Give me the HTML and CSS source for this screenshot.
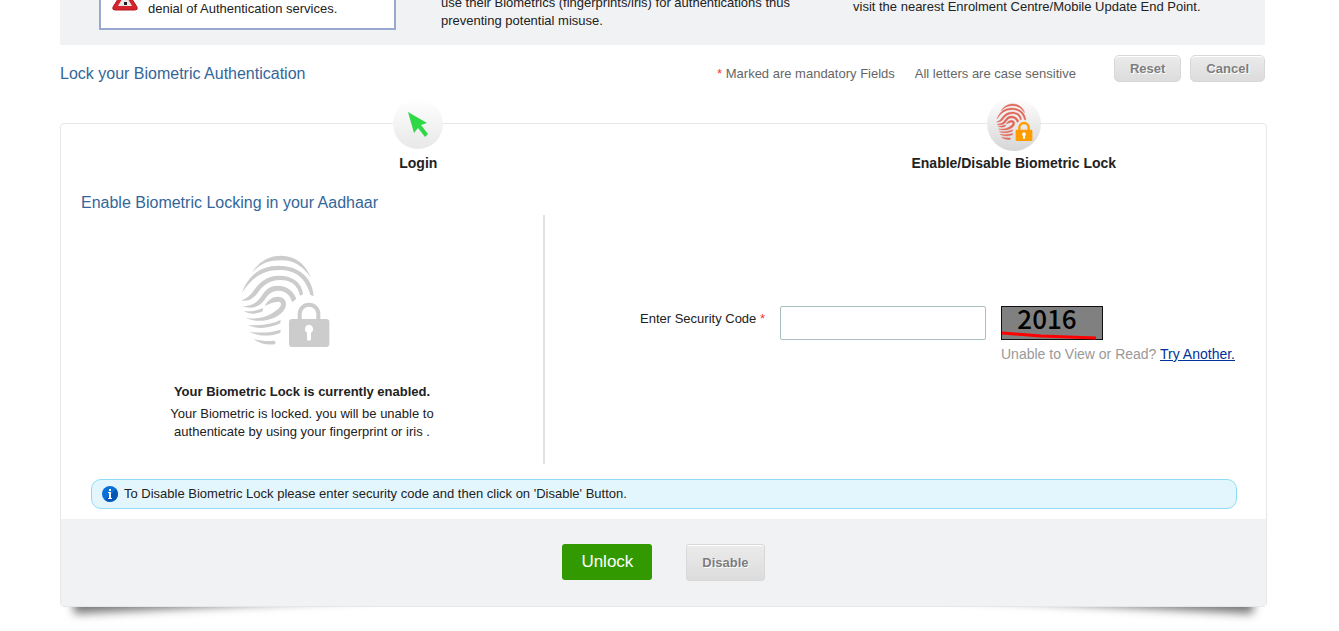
FILE: index.html
```html
<!DOCTYPE html>
<html lang="en">
<head>
    <meta charset="UTF-8">
    <meta name="viewport" content="width=device-width, initial-scale=1.0">
    <title>Lock your Biometric Authentication</title>
    <link rel="stylesheet" href="styles.css">
</head>
<body>
    <div class="container">
        <!-- Notes -->
        <div class="notes">
            <div class="note-box">
                <svg class="warning-icon" width="28" height="26" viewBox="0 0 28 26" aria-hidden="true">
                    <path d="M14 2 L26 21 Q27 24 24 24 L4 24 Q1 24 2 21 Z" fill="#d3252b" stroke="#b3181d"/>
                    <path d="M14 8 L21 20 L7 20 Z" fill="#e9e9e9"/>
                    <path d="M13 10 h2 v4 h-2 z M13 16 h3 v3 h-3 z" fill="#222"/>
                </svg>
                <p>denial of Authentication services.</p>
            </div>
            <p class="note-misuse">use their Biometrics (fingerprints/iris) for authentications thus<br>preventing potential misuse.</p>
            <p class="note-visit">visit the nearest Enrolment Centre/Mobile Update End Point.</p>
        </div>

        <form>
            <!-- Title bar -->
            <div class="title-bar">
                <h1>Lock your Biometric Authentication</h1>
                <p class="hint"><span class="required">*</span> Marked are mandatory Fields</p>
                <p class="hint">All letters are case sensitive</p>
                <div class="title-buttons">
                    <button type="reset" class="btn btn-grey">Reset</button>
                    <button type="button" class="btn btn-grey">Cancel</button>
                </div>
            </div>

            <div class="panel">
                <div class="steps">
                    <div class="step">
                        <div class="step-icon">
                            <svg width="50" height="50" viewBox="0 0 50 50" aria-hidden="true">
                                <defs>
                                    <linearGradient id="disc" x1="0" y1="0" x2="0" y2="1">
                                        <stop offset="0" stop-color="#ffffff"/>
                                        <stop offset="1" stop-color="#e8e8e8"/>
                                    </linearGradient>
                                </defs>
                                <circle cx="25" cy="25" r="25" fill="url(#disc)"/>
                                <path d="M15 13 L34 24 L28 26 L35 35 L32 38 L25 29 L21 34 Z" fill="#2fd846"/>
                            </svg>
                        </div>
                        <span>Login</span>
                    </div>
                    <div class="step">
                        <div class="step-icon">
                            <svg width="54" height="54" viewBox="0 0 162 162" aria-hidden="true">
                                <defs>
                                    <linearGradient id="disc-active" x1="0" y1="0" x2="0" y2="1">
                                        <stop offset="0" stop-color="#ffffff"/>
                                        <stop offset="1" stop-color="#d6d6d6"/>
                                    </linearGradient>
                                </defs>
                                <circle cx="81" cy="81" r="81" fill="url(#disc-active)"/>
                                <g transform="translate(4 2) scale(0.4)" fill="#e0685a" stroke="#e0685a" stroke-width="3">
                                    <use href="#finger"/>
                                </g>
                                <rect x="86" y="98" width="50" height="34" rx="3" fill="#ff9c00"/>
                                <path d="M97 99 V92 a14 14 0 0 1 28 0 V99" fill="none" stroke="#ff9c00" stroke-width="7"/>
                                <path d="M111 106 a6 6 0 0 1 3 11 v8 h-6 v-8 a6 6 0 0 1 3 -11 z" fill="#fff"/>
                            </svg>
                        </div>
                        <span>Enable/Disable Biometric Lock</span>
                    </div>
                </div>

                <h2>Enable Biometric Locking in your Aadhaar</h2>

                <div class="lock-row">
                    <!-- Current state -->
                    <div class="lock-status">
                        <svg width="120" height="94" viewBox="66 45 360 282" aria-hidden="true">
                            <g id="finger">
                                <path d="M96 98 C116 64 148 47 183 47 C224 47 258 72 272 112 C246 76 220 62 186 61 C150 60 121 70 96 98 Z"/>
                                <path d="M66 158 C84 105 125 77 174 77 C236 77 277 112 281 168 L271 165 C258 113 225 90 177 90 C130 90 96 112 66 158 Z"/>
                                <path d="M63 182 C80 176 92 166 102 151 C120 124 144 107 177 107 C219 107 246 129 249 163 L240 167 C234 136 212 119 179 120 C150 121 130 135 115 156 C101 176 84 185 63 182 Z"/>
                                <path d="M67 199 C92 198 110 190 123 170 C137 148 150 137 173 137 C201 137 220 153 229 176 L217 187 C209 164 197 152 175 152 C155 152 145 163 134 179 C118 202 95 208 67 199 Z"/>
                                <path d="M72 213 C93 216 111 212 129 204 L128 214 C110 223 88 224 72 213 Z"/>
                                <path d="M134 197 C145 179 158 170 173 170 C188 170 198 179 198 192 C198 209 183 224 163 233 C139 244 105 246 78 235 C111 237 137 232 154 221 C170 211 183 203 183 192 C182 184 173 184 164 187 C151 190 144 195 134 197 Z"/>
                                <path d="M83 255 C121 258 150 254 182 240 L181 250 C150 265 112 269 83 255 Z"/>
                                <path d="M88 275 C122 280 151 278 182 269 L181 279 C151 290 115 290 88 275 Z"/>
                                <path d="M100 297 C122 302 141 304 162 302 Q170 306 164 313 C141 316 121 311 100 297 Z"/>
                            </g>
                            <rect x="207" y="237" width="121" height="84" rx="9"/>
                            <path class="shackle" d="M239 239 V222 a28 28 0 0 1 56 0 V239"/>
                            <path class="keyhole" d="M267 254 a13 13 0 0 1 6 24 v21 q-6 6 -12 0 v-21 a13 13 0 0 1 6 -24 z"/>
                        </svg>
                        <p class="status-title">Your Biometric Lock is currently enabled.</p>
                        <p>Your Biometric is locked. you will be unable to<br>authenticate by using your fingerprint or iris .</p>
                    </div>

                    <!-- Security code -->
                    <div class="code-row">
                        <label for="securityCode">Enter Security Code <span class="required">*</span></label>
                        <input type="text" id="securityCode" required>
                        <div class="captcha">
                            <svg width="102" height="34" viewBox="0 0 102 34" role="img" aria-label="Security code">
                                <rect x="0.5" y="0.5" width="101" height="33" fill="#808080" stroke="#111"/>
                                <text x="46" y="23" text-anchor="middle" class="captcha-text">2016</text>
                                <path d="M1 27 L40 30 L95 32" fill="none" stroke="#f00" stroke-width="3"/>
                            </svg>
                            <p>Unable to View or Read? <a href="#">Try Another.</a></p>
                        </div>
                    </div>
                </div>

                <div class="info">
                    <svg width="16" height="16" viewBox="0 0 16 16" aria-hidden="true">
                        <circle cx="8" cy="8" r="8" fill="#0a6fd6"/>
                        <path d="M16 8 A8 8 0 0 1 3 14 L14 3 A8 8 0 0 1 16 8 Z" fill="#0657b5"/>
                        <path d="M7 3 h2 v2 h-2 z M6 6 h3 v6 h1 v1 h-4 v-1 h1 v-5 h-1 z" fill="#fff"/>
                    </svg>
                    <p>To Disable Biometric Lock please enter security code and then click on 'Disable' Button.</p>
                </div>

                <div class="actions">
                    <button type="submit" class="btn btn-green">Unlock</button>
                    <button type="button" class="btn btn-grey btn-tall">Disable</button>
                </div>
            </div>
        </form>
    </div>
</body>
</html>
```

FILE: styles.css
```css
* {
    box-sizing: border-box;
}

body {
    margin: 0;
    background-color: #fff;
    color: #222;
    font-family: "Liberation Sans", Arial, sans-serif;
    font-size: 13px;
    line-height: 18px;
}

.container {
    padding: 0 74px 24px 60px;
}

h1, h2, p {
    margin: 0;
}

h1, h2 {
    color: #336699;
    font-size: 16px;
    font-weight: normal;
    line-height: 20px;
}

.required {
    color: #f33;
}

/* notes */
.notes {
    display: flex;
    align-items: flex-end;
    height: 45px;
    padding: 0 39px 15px;
    background-color: #f1f2f4;
}

.note-box {
    display: flex;
    align-items: flex-end;
    gap: 9px;
    width: 297px;
    padding: 0 10px 10px;
    border: 2px solid #99a8cf;
    background-color: #fff;
}

.warning-icon {
    margin-bottom: 6px;
}

.note-misuse {
    width: 412px;
    padding-left: 45px;
}

.note-visit {
    padding-left: 45px;
    margin-bottom: 14px;
}

/* title bar */
.title-bar {
    display: flex;
    align-items: center;
    gap: 20px;
    padding-top: 10px;
}

.title-bar h1 {
    flex: 1;
    padding-top: 8px;
}

.hint {
    padding-top: 8px;
    color: #666;
}

.title-buttons {
    display: flex;
    gap: 9px;
    align-self: flex-start;
    margin-left: 18px;
    padding-bottom: 2px;
}

.btn {
    border-radius: 5px;
    font-family: inherit;
    cursor: pointer;
}

.btn-grey {
    height: 27px;
    padding: 0 15px;
    border: 1px solid #d8d8d8;
    background: linear-gradient(#ebebeb, #dcdcdc);
    box-shadow: inset 0 1px 0 #fff;
    color: #7d7d7d;
    font-size: 13px;
    font-weight: bold;
    text-shadow: 1px 1px 0 #fff;
}

.btn-tall {
    height: 37px;
    border-radius: 3px;
}

.btn-green {
    height: 36px;
    padding: 0 19px;
    border: none;
    border-radius: 3px;
    background-color: #339900;
    color: #fff;
    font-size: 17px;
}

/* main panel */
.panel {
    position: relative;
    margin: 39px -2px 0 0;
    border: 1px solid #e6e7e9;
    border-radius: 4px;
    background-color: #fff;
}

/* lifted corners */
.panel::before,
.panel::after {
    content: "";
    position: absolute;
    z-index: -1;
    bottom: 15px;
    left: 10px;
    top: 80%;
    width: 50%;
    max-width: 300px;
    box-shadow: 0 15px 10px #777;
    transform: rotate(-3deg);
}

.panel::after {
    left: auto;
    right: 10px;
    transform: rotate(3deg);
}

.steps {
    display: grid;
    grid-template-columns: 3fr 2fr;
    margin-top: -27px;
    padding-right: 14px;
}

.step {
    display: flex;
    flex-direction: column;
    align-items: center;
    gap: 3px;
    font-size: 14px;
    font-weight: bold;
}

.step-icon {
    display: flex;
    align-items: center;
    height: 54px;
}

.panel h2 {
    padding: 21px 20px 2px;
}

.lock-row {
    display: flex;
    min-height: 249px;
}

.lock-status {
    display: flex;
    flex-direction: column;
    align-items: center;
    width: calc(40% + 2px);
    padding-top: 40px;
    border-right: 2px solid #e2e2e2;
    text-align: center;
}

.lock-status svg {
    fill: #ccc;
}

.lock-status .shackle {
    fill: none;
    stroke: #ccc;
    stroke-width: 12;
}

.lock-status .keyhole {
    fill: #fff;
}

.status-title {
    margin: 34px 0 4px;
    font-weight: bold;
}

.code-row {
    flex: 1;
    display: flex;
    justify-content: flex-end;
    align-items: flex-start;
    gap: 15px;
    padding: 91px 31px 0 0;
}

.code-row label {
    padding-top: 4px;
}

.code-row input {
    width: 206px;
    height: 34px;
    padding: 0 8px;
    border: 1px solid #a9bfc0;
    border-radius: 2px;
    font-family: inherit;
    font-size: 13px;
}

.captcha svg {
    display: block;
    overflow: visible;
    margin-bottom: 5px;
}

.captcha p {
    color: #999;
    font-size: 14px;
}

.captcha a {
    color: #003399;
}

.captcha-text {
    font-family: "Noto Sans CJK SC", "DejaVu Sans", sans-serif;
    font-size: 26px;
    font-weight: 500;
}

.info {
    display: flex;
    align-items: center;
    gap: 6px;
    height: 30px;
    margin: 15px 29px 10px 30px;
    padding: 0 10px;
    border: 1px solid #8ddcf5;
    border-radius: 10px;
    background-color: #e3f6fd;
}

.actions {
    display: flex;
    justify-content: center;
    align-items: flex-start;
    gap: 34px;
    padding: 25px 0;
    background-color: #f1f2f4;
}
```
